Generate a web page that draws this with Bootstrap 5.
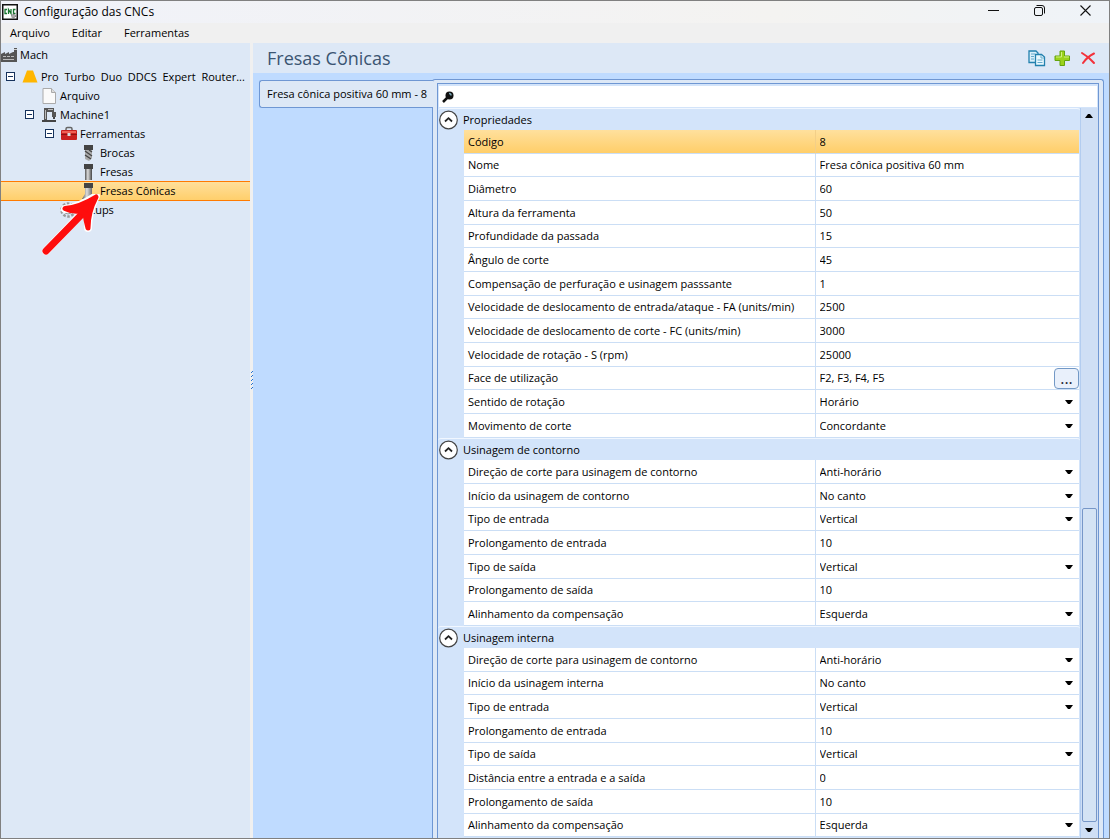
<!DOCTYPE html>
<html lang="pt-BR">
<head>
<meta charset="utf-8">
<meta name="viewport" content="width=device-width, initial-scale=1">
<title>Configuração das CNCs</title>
<link href="https://cdn.jsdelivr.net/npm/bootstrap@5.3.0/dist/css/bootstrap.min.css" rel="stylesheet">
<style>
body{font-family:"Open Sans","Noto Sans",sans-serif;font-size:11px;line-height:16px;color:#000;background:#fff;padding:0 4px 1px 0}
button,input,select{font:inherit;color:inherit}
svg{display:block;flex:none}
.app-window{min-height:calc(100vh - 1px);border:1px solid #808080;background:#f0f0f0}
.title-bar{height:22px;background:linear-gradient(90deg,#f0f2f9,#f4f3f1 70%,#eff3f8);font-size:12px;padding-left:1px}
.title-bar>span{padding-left:6px}
.caption-btn{width:46px;height:18px;border:0;background:none;padding:0 2px 0 0;display:flex;justify-content:center;align-items:center}
.caption-group{height:22px}
.menu-bar{height:20px;gap:22px;padding-left:9px}
.menu-bar a{color:#000;text-decoration:none}
.tree-pane{width:249px;background:#dde8f6;line-height:18px}
.tree-row{height:19px;gap:3px;white-space:nowrap;color:#000;text-decoration:none}
.tree-root{height:24px}
.tree-active{height:20px;margin-bottom:-1px;background:linear-gradient(#ffe09d,#ffce69);box-shadow:inset 0 1px #ff7a00,inset 0 -1px #ff7a00}
.lv1{padding-left:5px}.lv2{padding-left:40px}.lv3{padding-left:24px}.lv4{padding-left:44px}.lv5{padding-left:80px}.lv6{padding-left:59px}
.toggle-box{width:9px;height:9px;margin-right:4px;padding:0;border:1px solid #16325c;background:#fff;display:flex;align-items:center;justify-content:center}
.toggle-box::before{content:"";width:5px;height:1px;background:#16325c}
.pointer-arrow{left:40px;top:151px}
.splitter{width:3px;background:#f0f0f0}
.splitter::before{content:"";flex:41}
.splitter::after{content:"";flex:56}
.work-area{background:#bfdbff;min-width:0}
.page-head{height:30px;background:#dde8f6;padding:0 11px 0 14px}
.page-head h1{font-size:18px;line-height:24px;color:#3b5572;font-weight:400}
.tool-btn{width:18px;height:18px;padding:0;border:0;background:none}
.tab-area{padding-left:6px}
.tab-col{width:174px;padding-top:7px;z-index:1}
.tool-tab{height:28px;border:1px solid #6f97d3;border-right:0;border-radius:3px 0 0 3px;background:#dde8f6;padding:0 0 0 7px;text-align:left;white-space:nowrap}
.tab-body{border:1px solid #6f97d3;border-bottom:0;border-radius:3px 3px 0 0;background:#dde8f6;padding:3px 4px 0;margin:6px 5px 0 -1px;min-width:0}
.grid-frame{border:1px solid #6f97d3;border-bottom:0;background:#d3e4fa;height:100%}
.search-line{height:21px;background:#fff;margin:2px 1px 1px 1px;padding-left:2px}
.search-line input{border:0;outline:0;background:none;min-width:0}
.group-col{min-width:0}
.prop-head{height:22px;border-top:1px solid #f1f7ff;gap:4px;border-radius:3px;padding-left:1px}
.prop-head button{border:0;background:none;padding:0;height:20px}
.prop-head h2{font-size:11px;line-height:16px;font-weight:400}
.prop-table{width:calc(100% - 27px);margin:0 1px 0 26px;table-layout:fixed;border-collapse:separate;border-spacing:0;background:#fff}
.prop-table th,.prop-table td{height:24px;padding:0 0 0 4px;border-bottom:1px solid #cbdef5;font-weight:400;line-height:16px;vertical-align:middle;white-space:nowrap}
.prop-table td{border-left:1px solid #cbdef5}
.prop-table th{width:57%}
.cut-a tr:nth-child(3n+2)>*,.cut-b tr:nth-child(3n)>*,.cut-c tr:nth-child(3n+2)>*{height:23px}
.prop-table .cut-a tr:last-child>*{height:24px}
.prop-table input,.prop-table select{display:block;width:100%;height:16px;line-height:16px;border:0;padding:0;background:none;outline:0}
.prop-table select{appearance:none}
.picker{display:grid;align-items:center}
.picker>*{grid-area:1/1}
.picker svg{justify-self:end;margin-right:6px;pointer-events:none}
.row-sel>*{background:linear-gradient(#ffe09d,#ffce69)}
.prop-table .row-sel td{border-left-color:#f3cf88}
.more-btn{width:25px;height:21px;border:1px solid #7399c6;border-radius:4px;background:#e9f0fb;padding:0;color:#223;line-height:12px;font-size:16px}
.scroll-rail{width:18px;border-left:1px solid #b3cdf0;background:#cfdff5}
.scroll-rail button{border:0;background:none;padding:0;width:16px;height:16px;display:flex;align-items:center;justify-content:center}
.scroll-gap{flex:384}
.scroll-thumb{flex:312;width:15px;margin-left:1px;border:1px solid #7797c8;border-radius:2px;background:#d4e3f4}
</style>
</head>
<body>
<svg width="0" height="0" class="position-absolute" aria-hidden="true"><defs>
<symbol id="down" viewBox="0 0 8 4"><path d="M0 0h8L5 4H3z"/></symbol>
<symbol id="chev" viewBox="0 0 20 20"><circle cx="9.500" cy="10" r="8.800" fill="#fff" stroke="#444" stroke-width="1.200"/><path d="M6 11.500 9.500 8.200l3.500 3.300" fill="none" stroke="#222" stroke-width="1.800"/></symbol>
<linearGradient id="steel"><stop stop-color="#555"/><stop offset=".4" stop-color="#ddd"/><stop offset="1" stop-color="#444"/></linearGradient>
</defs></svg>
<div class="app-window d-flex flex-column">
<header class="title-bar d-flex align-items-center">
<svg width="16" height="16"><rect x=".75" y=".75" width="14.500" height="14.500" fill="#fff" stroke="#111" stroke-width="1.500"/><path d="M5 5.500H3v4h2M6.500 10V5.500L9 9.500V5M13.500 5.500h-2v4h2" fill="none" stroke="#18752f" stroke-width="1.300"/><circle cx="11.500" cy="12" r="2" fill="#aaa" stroke="#666" stroke-dasharray="1 1"/></svg>
<span>Configuração das CNCs</span>
<div class="caption-group d-flex ms-auto">
<button class="caption-btn" aria-label="Minimizar"><svg width="11" height="11"><path d="M0 5.500h11" stroke="#111"/></svg></button>
<button class="caption-btn" aria-label="Restaurar"><svg width="11" height="11" fill="none" stroke="#111"><rect x=".5" y="2.500" width="8" height="8" rx="1.500"/><path d="M2.500.5H8q2.500 0 2.500 2.500v5.500"/></svg></button>
<button class="caption-btn" aria-label="Fechar"><svg width="11" height="11"><path d="m.5.5 10 10m0-10-10 10" stroke="#111" stroke-width="1.100"/></svg></button>
</div>
</header>
<nav class="menu-bar d-flex align-items-center"><a href="#">Arquivo</a><a href="#">Editar</a><a href="#">Ferramentas</a></nav>
<main class="d-flex flex-grow-1">
<aside class="tree-pane flex-shrink-0 position-relative">
<a href="#" class="tree-row tree-root d-flex align-items-center"><svg width="16" height="16"><path d="M0 15V7l4-2v2l4-2v2l4-2h1V1h3v14z" fill="#555"/><path d="M2 9h3v1H2zm4 0h3v1H6zm4 0h3v1h-3zM2 12h11v1H2z" fill="#bbb"/><path d="M13 2h3v1h-3z" fill="#ccc"/></svg>Mach</a>
<div class="tree-row lv1 d-flex align-items-center"><button class="toggle-box" aria-label="Recolher"></button><svg width="16" height="13"><path d="M5 .5h6L15.500 12.500H.5z" fill="#ffb600"/></svg><span>Pro&nbsp; Turbo&nbsp; Duo&nbsp; DDCS&nbsp; Expert&nbsp; Router...</span></div>
<a href="#" class="tree-row lv2 d-flex align-items-center"><svg width="16" height="16"><path d="M2 .5h8.500l4 4v11H2z" fill="#fafafa" stroke="#aaa"/><path d="M10.500.5v4h4" fill="#ddd" stroke="#aaa"/></svg>Arquivo</a>
<div class="tree-row lv3 d-flex align-items-center"><button class="toggle-box" aria-label="Recolher"></button><svg width="16" height="16"><path d="M3 1h10v4h2v5h-4V5H6v8H3z" fill="#555"/><path d="M12 10h2v2h-2zM1 13h14v2H1z" fill="#444"/><path d="M4 3h1v9H4zM7 2h5v1H7z" fill="#bbb"/></svg>Machine1</div>
<div class="tree-row lv4 d-flex align-items-center"><button class="toggle-box" aria-label="Recolher"></button><svg width="16" height="16"><path d="M5 5V3q0-1.500 1.500-1.500h3Q11 1.500 11 3v2" fill="none" stroke="#666" stroke-width="1.500"/><rect y="4" width="16" height="10" rx="1" fill="#c92020"/><path d="M1 5h14v2H1z" fill="#ef6055"/><path d="M0 8h16v1H0z" fill="#8e1212"/><path d="M6.500 7h3v3h-3z" fill="#ddd"/></svg>Ferramentas</div>
<a href="#" class="tree-row lv5 d-flex align-items-center"><svg width="16" height="16"><path d="M3 0h9v5H3z" fill="#444"/><path d="M4 5h7v8l-3 3-4-2z" fill="#aaa"/><path d="m4 6 7 5M4 10l6 4M8 5l3 2" stroke="#444" stroke-width="1.300"/></svg>Brocas</a>
<a href="#" class="tree-row lv5 d-flex align-items-center"><svg width="16" height="16"><path d="M3 0h9v5H3z" fill="#444"/><path d="M4 5h7v11H4z" fill="url(#steel)"/></svg>Fresas</a>
<a href="#" class="tree-row tree-active lv5 d-flex align-items-center"><svg width="16" height="16"><path d="M3 0h9v5H3z" fill="#444"/><path d="M4 5h7v6l2 5H1l3-5z" fill="url(#steel)"/></svg>Fresas Cônicas</a>
<a href="#" class="tree-row lv6 d-flex align-items-center"><svg width="16" height="16"><circle cx="8" cy="8" r="6.500" fill="none" stroke="#999" stroke-width="2.500" stroke-dasharray="2.500 1.600"/><circle cx="8" cy="8" r="4" fill="#eee" stroke="#999"/></svg><span>Setups</span></a>
<svg class="pointer-arrow position-absolute" width="62" height="62" viewBox="0 0 62 62" fill="none" stroke-linecap="round" stroke-linejoin="round" aria-hidden="true"><path d="M5 57 45 15M24 15Q39 13 55 2Q47 18 47 34" stroke="#fff" stroke-width="8"/><path d="M5 57 45 16" stroke="#fe0d0d" stroke-width="7"/><path d="M24 14.500Q39 13 55 3Q47 18 47 34Q45 27 44 20L39 17Q31 18 24 14.500z" fill="#fe0d0d" stroke="#fe0d0d" stroke-width="5"/></svg>
</aside>
<div class="splitter d-flex flex-column flex-shrink-0"><svg width="3" height="18" aria-hidden="true"><path d="M1.500 1v17" stroke="#2372d2" stroke-dasharray="1 3"/><path d="M2.500 0v17" stroke="#2372d2" stroke-dasharray="1 3"/></svg></div>
<section class="work-area d-flex flex-column flex-grow-1">
<div class="page-head d-flex align-items-center"><h1 class="m-0 me-auto">Fresas Cônicas</h1>
<div class="d-flex gap-2">
<button class="tool-btn" aria-label="Copiar"><svg width="18" height="17" stroke="#2381ae" stroke-width="1.300"><path d="M1 1h7l2 2v9.500H1z" fill="#d9effa"/><path d="M7.500 4.500h6L16.500 7v8.500h-9z" fill="#e9f8fe"/><path d="M9.500 10h5m-5 2.500h5M3 4h4M3 6.500h3M3 9h3M13 5v3h3" fill="none" stroke-width="1" stroke="#65aacb"/></svg></button>
<button class="tool-btn" aria-label="Adicionar"><svg width="17" height="17"><path d="M6 1h4.500v5h5v4.500h-5v5H6v-5H1V6h5z" fill="#9bd21b" stroke="#65a40c"/><path d="M7.500 2v5H2m8 0h5" fill="none" stroke="#d0f080"/></svg></button>
<button class="tool-btn" aria-label="Excluir"><svg width="17" height="17"><path d="M2 3Q9 7 14 13M14 3.500Q7 7 3 13" fill="none" stroke="#f3323b" stroke-width="2" stroke-linecap="round"/></svg></button>
</div></div>
<div class="tab-area d-flex flex-grow-1">
<div class="tab-col flex-shrink-0 position-relative"><button class="tool-tab w-100">Fresa cônica positiva 60 mm - 8</button></div>
<div class="tab-body flex-grow-1"><div class="grid-frame d-flex flex-column">
<div class="search-line d-flex align-items-center"><svg width="14" height="14"><path d="m2 12 5-5" stroke="#111" stroke-width="2.500"/><circle cx="8.500" cy="5.500" r="4" fill="#111"/><path d="M8 3.500q2 0 2 2" fill="none" stroke="#79a7b5" stroke-width="1.500"/></svg><input class="flex-grow-1" type="search" aria-label="Pesquisar"></div>
<div class="d-flex flex-grow-1"><div class="group-col flex-grow-1" id="groups"></div>
<div class="scroll-rail d-flex flex-column flex-shrink-0"><button aria-label="Rolar para cima"><svg width="8" height="4"><path d="M3 0h2l3 4H0z"/></svg></button><div class="scroll-gap"></div><div class="scroll-thumb"></div><button aria-label="Rolar para baixo"><svg width="8" height="4"><use href="#down"/></svg></button></div>
</div></div></div>
</div>
</section>
</main>
</div>
<script>
const groups=[
["Propriedades","cut-a",[["Código","8"],["Nome","Fresa cônica positiva 60 mm"],["Diâmetro","60"],["Altura da ferramenta","50"],["Profundidade da passada","15"],["Ângulo de corte","45"],["Compensação de perfuração e usinagem passsante","1"],["Velocidade de deslocamento de entrada/ataque - FA (units/min)","2500"],["Velocidade de deslocamento de corte - FC (units/min)","3000"],["Velocidade de rotação - S (rpm)","25000"],["Face de utilização","F2, F3, F4, F5","more"],["Sentido de rotação","Horário","list"],["Movimento de corte","Concordante","list"]]],
["Usinagem de contorno","cut-b",[["Direção de corte para usinagem de contorno","Anti-horário","list"],["Início da usinagem de contorno","No canto","list"],["Tipo de entrada","Vertical","list"],["Prolongamento de entrada","10"],["Tipo de saída","Vertical","list"],["Prolongamento de saída","10"],["Alinhamento da compensação","Esquerda","list"]]],
["Usinagem interna","cut-c",[["Direção de corte para usinagem de contorno","Anti-horário","list"],["Início da usinagem interna","No canto","list"],["Tipo de entrada","Vertical","list"],["Prolongamento de entrada","10"],["Tipo de saída","Vertical","list"],["Distância entre a entrada e a saída","0"],["Prolongamento de saída","10"],["Alinhamento da compensação","Esquerda","list"]]]];
document.getElementById("groups").innerHTML=groups.map(([name,cut,rows],g)=>`<section><div class="prop-head d-flex align-items-center"><button aria-label="Recolher ${name}"><svg width="20" height="20"><use href="#chev"/></svg></button><h2 class="m-0">${name}</h2></div><table class="prop-table ${cut}"><tbody>${rows.map(([label,value,kind],r)=>{
const id=`p${g}-${r}`;
let field=`<input id="${id}" type="text" value="${value}">`;
if(kind==="list")field=`<div class="picker"><select id="${id}"><option>${value}</option></select><svg width="8" height="4"><use href="#down"/></svg></div>`;
if(kind==="more")field=`<div class="d-flex align-items-center">${field}<button class="more-btn flex-shrink-0" aria-label="Escolher faces">...</button></div>`;
return `<tr${g+r===0?' class="row-sel"':''}><th scope="row"><label for="${id}">${label}</label></th><td>${field}</td></tr>`}).join("")}</tbody></table></section>`).join("");
</script>
<script src="https://cdn.jsdelivr.net/npm/bootstrap@5.3.0/dist/js/bootstrap.bundle.min.js"></script>
</body>
</html>
